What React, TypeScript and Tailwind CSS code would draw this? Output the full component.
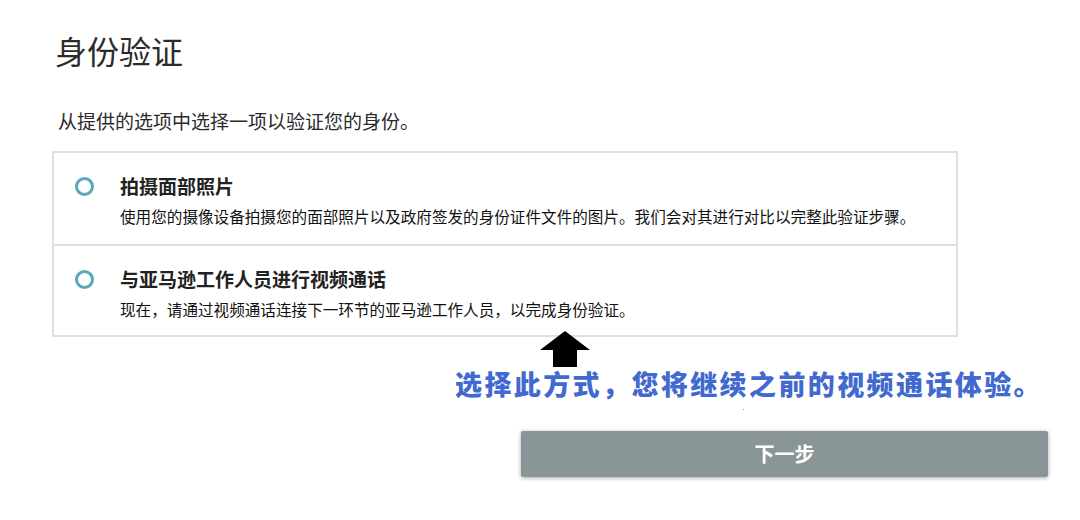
import React from "react";

const options = [
  {
    title: "拍摄面部照片",
    desc: "使用您的摄像设备拍摄您的面部照片以及政府签发的身份证件文件的图片。我们会对其进行对比以完整此验证步骤。",
  },
  {
    title: "与亚马逊工作人员进行视频通话",
    desc: "现在，请通过视频通话连接下一环节的亚马逊工作人员，以完成身份验证。",
  },
];

const App = () => {
  return (
    <div
      className="w-[1080px] h-[520px] bg-white overflow-hidden text-[#2b2b2b]"
      style={{ fontFamily: '"Noto Sans CJK SC", "Noto Sans", sans-serif' }}
    >
      <div className="pl-[52px] pt-[34px]">
        <h1 className="text-[32px] leading-none font-normal ml-[3px]">身份验证</h1>
        <p className="mt-[45px] ml-[6px] text-[19px] leading-none">
          从提供的选项中选择一项以验证您的身份。
        </p>

        {/* option list */}
        <div className="mt-[21px] w-[906px] border-2 border-[#e0e0e0]">
          {options.map((o, i) => (
            <div
              key={o.title}
              className={
                "h-[91px] flex items-start pl-[21px] pt-[23px] " +
                (i > 0 ? "border-t-2 border-[#e0e0e0]" : "")
              }
            >
              <span className="mt-[1px] w-[19px] h-[19px] rounded-full border-[3.5px] border-[#5ba8ba] shrink-0" />
              <div className="ml-[26px]">
                <div className="text-[19px] leading-none font-bold text-[#222]">{o.title}</div>
                <div className="mt-[14px] text-[15.6px] leading-none text-[#111]">{o.desc}</div>
              </div>
            </div>
          ))}
        </div>

        {/* annotation */}
        <div className="relative h-[94px]">
          <svg
            className="absolute left-[488px] top-[-6px]"
            width="50"
            height="36"
            viewBox="0 0 50 36"
          >
            <polygon points="25,0 50,19 37,19 37,36 13,36 13,19 0,19" fill="#000" />
          </svg>
          <p className="pt-[33px] ml-[403px] text-[27px] leading-none font-black tracking-[2.4px] text-[#4169cf] whitespace-nowrap">
            选择此方式，您将继续之前的视频通话体验。
          </p>
          <span className="absolute left-[691px] top-[72px] w-[1px] h-[1px] bg-[#999]" />
        </div>

        <button className="ml-[469px] w-[527px] h-[46px] bg-[#8a9597] text-white text-[20px] font-bold shadow-[0_1px_4px_rgba(0,0,0,0.35)] rounded-[2px]">
          下一步
        </button>
      </div>
    </div>
  );
};

export default App;
